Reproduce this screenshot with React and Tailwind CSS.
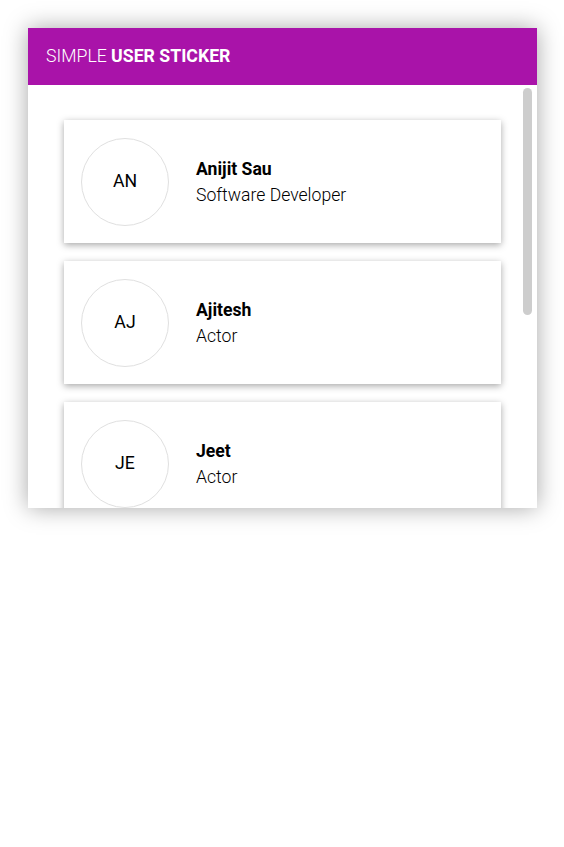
import React from "react";

const users = [
  { initials: "AN", name: "Anijit Sau", role: "Software Developer" },
  { initials: "AJ", name: "Ajitesh", role: "Actor" },
  { initials: "JE", name: "Jeet", role: "Actor" },
  { initials: "SR", name: "Srabanti", role: "Actress" },
  { initials: "DE", name: "Dev", role: "Actor" },
];

export default function App() {
  return (
    <div className="min-h-[847px] bg-white" style={{ fontFamily: "Roboto, 'Liberation Sans', sans-serif" }}>
      <div className="pl-[28px] pt-[28px]">
        <div className="w-[509px] h-[480px] bg-white shadow-[0_0_22px_rgba(0,0,0,0.35)] flex flex-col">
          <div className="h-[57px] bg-[#a913a9] flex items-center pl-[18px] text-white text-[17.7px]">
            <span className="font-light">SIMPLE&nbsp;</span>
            <span className="font-bold">USER STICKER</span>
          </div>
          <div className="relative flex-1 overflow-y-auto [scrollbar-width:none]">
            <div className="flex flex-col gap-[18px] pt-[35px] px-[36px] pb-[35px]">
              {users.map((u) => (
                <div
                  key={u.initials}
                  className="h-[123px] shrink-0 bg-white shadow-[0_2px_7px_rgba(0,0,0,0.35)] flex items-center pl-[17px]"
                >
                  <div className="w-[88px] h-[88px] rounded-full border border-[#e0e0e0] flex items-center justify-center text-[17.7px] text-black">
                    {u.initials}
                  </div>
                  <div className="ml-[27px] flex flex-col text-[17.6px] leading-[26px] text-black">
                    <span className="font-bold">{u.name}</span>
                    <span className="font-light">{u.role}</span>
                  </div>
                </div>
              ))}
            </div>
          </div>
        </div>
      </div>
      <div className="absolute left-[523px] top-[88px] w-[9px] h-[227px] rounded-full bg-[#cdcdcd]" />
    </div>
  );
}
